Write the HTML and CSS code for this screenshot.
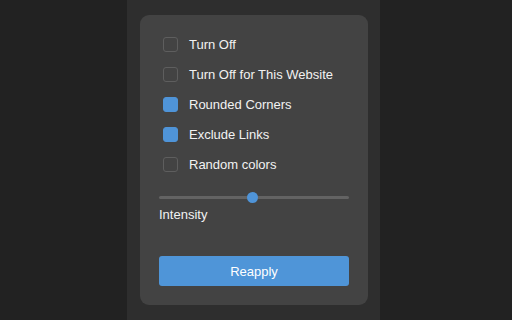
FILE: index.html
```html
<html lang="en">
<head>
    <meta charset="UTF-8">
    <meta name="viewport" content="width=device-width, initial-scale=1.0">
    <link rel="stylesheet" href="styles.css">
    <title>Options</title>
</head>
<body>
    <div class="Column">
        <div class="Card">
            <div class="OptList">
                <label class="OptRow"><span class="Box"></span>Turn Off</label>
                <label class="OptRow"><span class="Box"></span>Turn Off for This Website</label>
                <label class="OptRow"><span class="Box Checked"></span>Rounded Corners</label>
                <label class="OptRow"><span class="Box Checked"></span>Exclude Links</label>
                <label class="OptRow"><span class="Box"></span>Random colors</label>
            </div>
            <div class="SliderDiv">
                <div class="Track">
                    <span class="Thumb" style="left: 49%;"></span>
                </div>
            </div>
            <p class="Label">Intensity</p>
            <button class="ReapplyBtn">Reapply</button>
        </div>
    </div>
</body>
</html>
```

FILE: styles.css
```css
body{
    margin: 0;
    height: 320px;
    background-color: #222222;
    font-family: 'Liberation Sans', Arial, sans-serif;
    overflow: hidden;
}
.Column{
    width: 253px;
    height: 320px;
    margin-left: 127px;
    background-color: #2e2e2e;
    padding: 15px 12px 0 13px;
    box-sizing: border-box;
}
.Card{
    background-color: #434343;
    border-radius: 9px;
    padding: 14px 19px 19px 19px;
    height: 290px;
    box-sizing: border-box;
    display: flex;
    flex-direction: column;
}
.OptList{
    padding-left: 4px;
}
.OptRow{
    display: flex;
    align-items: center;
    height: 30px;
    color: #f2f2f2;
    font-size: 13px;
}
.Box{
    width: 15px;
    height: 15px;
    box-sizing: border-box;
    border: 1px solid #5e5e5e;
    border-radius: 3px;
    margin-right: 11px;
}
.Checked{
    background-color: #4f94d8;
    border-color: #4f94d8;
}
.SliderDiv{
    height: 11px;
    margin-top: 13px;
    display: flex;
    align-items: center;
}
.Track{
    position: relative;
    width: 100%;
    height: 3px;
    border-radius: 2px;
    background-color: #636363;
}
.Thumb{
    position: absolute;
    top: -4px;
    width: 11px;
    height: 11px;
    margin-left: -5px;
    border-radius: 50%;
    background-color: #4f94d8;
}
.Label{
    margin: 4px 0 0 0;
    color: #f2f2f2;
    font-size: 13px;
    line-height: 16px;
}
.ReapplyBtn{
    margin-top: auto;
    height: 30px;
    border: none;
    border-radius: 3px;
    background-color: #4f95d8;
    color: #ffffff;
    font-family: 'Liberation Sans', Arial, sans-serif;
    font-size: 13px;
}
```
